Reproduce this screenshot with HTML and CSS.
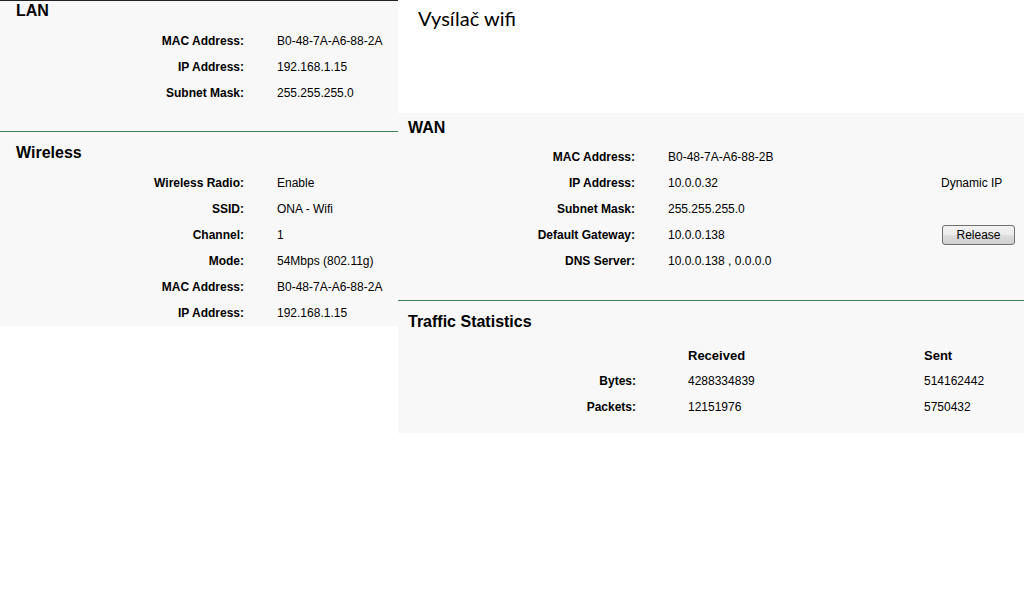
FILE: index.html
```html
<!DOCTYPE html>
<html lang="cs">
<head>
    <meta charset="UTF-8">
    <title>Vysílač wifi</title>
    <link rel="stylesheet" href="styles.css">
</head>
<body>
    <div class="page">
        <!-- LAN + Wireless -->
        <div class="column left-col">
            <div class="panel lan-panel">
                <div class="section lan">
                    <h2>LAN</h2>
                    <div class="rows">
                        <div class="label">MAC Address:</div><div class="value">B0-48-7A-A6-88-2A</div>
                        <div class="label">IP Address:</div><div class="value">192.168.1.15</div>
                        <div class="label">Subnet Mask:</div><div class="value">255.255.255.0</div>
                    </div>
                </div>
                <div class="section wireless">
                    <h2>Wireless</h2>
                    <div class="rows">
                        <div class="label">Wireless Radio:</div><div class="value">Enable</div>
                        <div class="label">SSID:</div><div class="value">ONA - Wifi</div>
                        <div class="label">Channel:</div><div class="value">1</div>
                        <div class="label">Mode:</div><div class="value">54Mbps (802.11g)</div>
                        <div class="label">MAC Address:</div><div class="value">B0-48-7A-A6-88-2A</div>
                        <div class="label">IP Address:</div><div class="value">192.168.1.15</div>
                    </div>
                </div>
            </div>
        </div>

        <!-- caption + WAN + Traffic -->
        <div class="column right-col">
            <div class="caption">Vysílač wifi</div>
            <div class="panel wan-panel">
                <div class="section wan">
                    <h2>WAN</h2>
                    <div class="rows wan-rows">
                        <div class="label">MAC Address:</div><div class="value">B0-48-7A-A6-88-2B</div><div></div>
                        <div class="label">IP Address:</div><div class="value">10.0.0.32</div><div class="extra">Dynamic IP</div>
                        <div class="label">Subnet Mask:</div><div class="value">255.255.255.0</div><div></div>
                        <div class="label">Default Gateway:</div><div class="value">10.0.0.138</div><div class="extra"><button type="button">Release</button></div>
                        <div class="label">DNS Server:</div><div class="value">10.0.0.138 , 0.0.0.0</div><div></div>
                    </div>
                </div>
                <div class="section traffic">
                    <h2>Traffic Statistics</h2>
                    <div class="rows traffic-rows">
                        <div></div><div class="head">Received</div><div class="head">Sent</div>
                        <div class="label">Bytes:</div><div class="value">4288334839</div><div class="value">514162442</div>
                        <div class="label">Packets:</div><div class="value">12151976</div><div class="value">5750432</div>
                    </div>
                </div>
            </div>
        </div>
    </div>
</body>
</html>
```

FILE: styles.css
```css
body {
    margin: 0;
    background-color: #fff;
    font-family: "Liberation Sans", Arial, sans-serif;
    font-size: 12px;
    color: #000;
}

.page {
    display: flex;
    align-items: flex-start;
}

.left-col {
    flex: none;
    width: 398px;
}

.right-col {
    flex: 1;
    min-width: 0;
}

.panel {
    background-color: #f8f8f8;
}

.lan-panel {
    border-top: 1px solid #222;
}

h2 {
    margin: 0;
    font-size: 16px;
    line-height: 20px;
    font-weight: bold;
    padding: 0 0 7px 16px;
}

.section + .section {
    border-top: 1px solid #3f7f52;
}

.lan {
    padding-bottom: 25px;
}

.wireless {
    padding-top: 11px;
}

.rows {
    display: grid;
    grid-template-columns: 244px 1fr;
    column-gap: 33px;
    grid-auto-rows: 26px;
    align-items: center;
    white-space: nowrap;
}

.label {
    text-align: right;
    font-weight: bold;
}

/* right column */
.caption {
    height: 113px;
    box-sizing: border-box;
    padding: 6px 0 0 20px;
    font-family: Lato, "Open Sans", sans-serif;
    font-size: 20px;
    line-height: 24px;
}

.wan-panel h2 {
    padding-left: 10px;
}

.wan {
    padding-top: 5px;
    padding-bottom: 26px;
}

.wan h2 {
    padding-bottom: 6px;
}

.wan-rows {
    grid-template-columns: 237px 240px 1fr;
}

.traffic {
    padding-top: 11px;
    padding-bottom: 13px;
}

.traffic h2 {
    padding-bottom: 10px;
}

.traffic-rows {
    grid-template-columns: 238px 184px 1fr;
    column-gap: 52px;
}

.head {
    font-size: 13px;
    font-weight: bold;
}

button {
    width: 73px;
    height: 20px;
    margin-left: 1px;
    padding: 0;
    font-family: "Liberation Sans", Arial, sans-serif;
    font-size: 12px;
    color: #000;
    border: 1px solid #707070;
    border-radius: 3px;
    background: linear-gradient(#f2f2f2, #ebebeb 50%, #dddddd 51%, #cfcfcf);
}
```
